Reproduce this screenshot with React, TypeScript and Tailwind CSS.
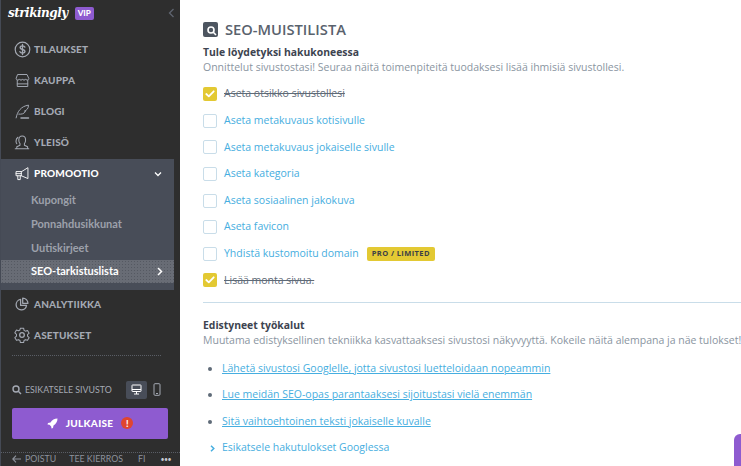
import React from "react";

const Stroke = ({ children, size = 20 }: { children: React.ReactNode; size?: number }) => (
  <svg width={size} height={size} viewBox="0 0 20 20" fill="none" stroke="currentColor" strokeWidth="1.300" strokeLinecap="round" strokeLinejoin="round" className="shrink-0">
    {children}
  </svg>
);

const icons: Record<string, React.ReactNode> = {
  dollar: (
    <Stroke size={17}>
      <circle cx="10" cy="10" r="8.6" strokeWidth="1.4" />
      <path d="M12.800 7.200c-.5-1-1.500-1.400-2.800-1.400-1.600 0-2.800.8-2.800 2.100 0 2.900 5.700 1.300 5.700 4.200 0 1.300-1.200 2.100-2.900 2.100-1.400 0-2.500-.5-3-1.600M10 4v12" strokeWidth="1.600" />
    </Stroke>
  ),
  store: (
    <Stroke size={15}>
      <path d="M4 2h12l2.500 5.500c0 1.500-1.300 2-2.200 2-1.100 0-2-.7-2.200-1.600-.2 1-1.100 1.600-2.100 1.600s-1.800-.6-2-1.600c-.2 1-1 1.600-2 1.600S6.100 8.900 5.900 7.900C5.700 8.800 4.800 9.500 3.700 9.500c-.9 0-2.200-.5-2.200-2zM3 9.500V18h14V9.500M3 14.500h14" />
    </Stroke>
  ),
  quill: (
    <Stroke size={15}>
      <path d="M1.500 18.500 C3 10 8 3 18 1.500 C18 6 15.500 8.500 12.500 9.500 L14 10 C12 13 9 14 5 13.500" />
      <path d="M8 18.500h10" strokeWidth="2" />
    </Stroke>
  ),
  people: (
    <Stroke size={16}>
      <path d="M1.500 18.500h17M3.500 18.500v-2.500l4-2v-2c-1-1-1.500-2.500-1.500-4.500 0-3 1.500-5 4.200-5s4.300 2 4.300 5c0 2-.5 3.500-1.500 4.500v2l4 2v2.500" />
      <path d="M5 4C3.500 5 2.500 6.500 2.500 9c0 1.200.3 2.300 1 3" />
    </Stroke>
  ),
  megaphone: (
    <Stroke size={14}>
      <path d="M18.500 1.500v15L9 12.500H1.500v-6H9zM4 12.500v5.500h3.500v-5.500M1.500 9.500H9M9 6.500v6" />
    </Stroke>
  ),
  pie: (
    <Stroke size={14}>
      <path d="M8 3.500a7.500 7.500 0 1 0 8.500 8.500H8z" strokeWidth="1.800" />
      <path d="M11 1.500a7.500 7.500 0 0 1 7.500 7.500H11z" strokeWidth="1.800" />
    </Stroke>
  ),
  gear: (
    <Stroke size={16}>
      <path d="M8 1.500h4l.6 2.700 1.700 1 2.600-.9 2 3.400-2 1.900v1.800l2 1.900-2 3.400-2.600-.9-1.700 1-.6 2.700H8l-.6-2.700-1.700-1-2.600.9-2-3.400 2-1.900V9.100l-2-1.900 2-3.400 2.600.9 1.700-1z" />
      <circle cx="10" cy="10" r="2.900" strokeWidth="1.600" />
    </Stroke>
  ),
};

const NavItem = ({ icon, label, active }: { icon: string; label: string; active?: boolean }) => (
  <div className={`flex h-[30.75px] items-center gap-[3px] pl-[12px] text-[10px] font-black tracking-[0.15px] ${active ? "text-white" : "text-[#a4a9b3]"}`}>
    <span className="flex w-[18px] justify-center">{icons[icon]}</span>
    <span>{label}</span>
  </div>
);

const Check = ({ done, label, badge }: { done?: boolean; label: string; badge?: boolean }) => (
  <div className="flex h-[26.6px] items-center">
    {done ? (
      <span className="flex h-[14px] w-[14px] items-center justify-center rounded-[2px] bg-[#e3c933]">
        <svg width="10" height="8" viewBox="0 0 10 8" fill="none" stroke="white" strokeWidth="1.800" strokeLinecap="round" strokeLinejoin="round">
          <path d="M1.300 4 3.800 6.300 8.700 1.300" />
        </svg>
      </span>
    ) : (
      <span className="h-[14px] w-[14px] rounded-[2px] border border-[#c9dde9] bg-white" />
    )}
    <span className={`ml-[7px] text-[10.5px] ${done ? "text-[#5f6b78] line-through" : "text-[#46aee0]"}`}>{label}</span>
    {badge && (
      <span className="ml-[8px] flex h-[14px] items-center rounded-[2px] bg-[#e3c933] px-[5px] text-[7.5px] font-bold tracking-[0.4px] text-[#3b3f46]">PRO / LIMITED</span>
    )}
  </div>
);

const Bullet = ({ label }: { label: string }) => (
  <div className="flex h-[26.4px] items-center pl-[5px]">
    <span className="h-[4px] w-[4px] rounded-full bg-[#5f6b78]" />
    <span className="ml-[10px] text-[10.5px] text-[#46aee0] underline">{label}</span>
  </div>
);

export default function App() {
  return (
    <div className="relative flex h-[466px] w-[741px] overflow-hidden bg-white font-['Open_Sans',sans-serif]">
      <aside className="flex h-full w-[180px] shrink-0 flex-col border-l border-[#454a55] bg-[#2e2e2e] font-['Lato',sans-serif]">
        <div className="flex h-[26px] shrink-0 items-center pl-[7px]">
          <span className="font-['DejaVu_Serif',serif] text-[12px] font-bold italic tracking-[-0.5px] text-white">strikingly</span>
          <span className="ml-[7px] flex h-[13px] items-center rounded-[2px] bg-[#8e5bd0] px-[3px] text-[8px] font-black text-white">VIP</span>
          <svg width="7" height="10" viewBox="0 0 7 10" fill="none" stroke="#5f6570" strokeWidth="1.300" className="ml-auto mr-[5px]">
            <path d="M5.500 1 1.500 5l4 4" />
          </svg>
        </div>
        <div className="flex flex-col pt-[8.5px]">
          <NavItem icon="dollar" label="TILAUKSET" />
          <NavItem icon="store" label="KAUPPA" />
          <NavItem icon="quill" label="BLOGI" />
          <NavItem icon="people" label="YLEISÖ" />
        </div>
        <div className="mt-[1.5px] flex h-[131px] w-[173px] shrink-0 flex-col bg-[#484d58]">
          <div className="flex h-[29px] items-center pr-[12px]">
            <div className="flex-1"><NavItem icon="megaphone" label="PROMOOTIO" active /></div>
            <svg width="8" height="6" viewBox="0 0 8 6" fill="none" stroke="white" strokeWidth="1.300"><path d="M1 1.500 4 4.500l3-3" /></svg>
          </div>
          <div className="flex h-[24px] items-center pl-[30px] text-[11px] font-bold text-[#9da1ab]">Kupongit</div>
          <div className="flex h-[24px] items-center pl-[30px] text-[11px] font-bold text-[#9da1ab]">Ponnahdusikkunat</div>
          <div className="flex h-[24px] items-center pl-[30px] text-[11px] font-bold text-[#9da1ab]">Uutiskirjeet</div>
          <div className="flex h-[23px] items-center justify-between bg-[#686c75] bg-[radial-gradient(#555962_0.5px,transparent_0.6px)] bg-[length:3px_3px] pl-[30px] pr-[11px] text-[11px] font-bold text-white">
            <span>SEO-tarkistuslista</span>
            <svg width="6" height="9" viewBox="0 0 6 9" fill="none" stroke="white" strokeWidth="1.500"><path d="M1 1l3.500 3.500L1 8" /></svg>
          </div>
        </div>
        <div className="-mt-[1px] flex flex-col">
          <NavItem icon="pie" label="ANALYTIIKKA" />
          <NavItem icon="gear" label="ASETUKSET" />
        </div>
        <div className="ml-[11px] mt-[4px] w-[149px] border-t border-dotted border-[#5a5e66]" />
        <div className="mt-[25px] flex h-[18px] items-center pl-[11px]">
          <svg width="10" height="10" viewBox="0 0 10 10" fill="none" stroke="#a4a9b3" strokeWidth="1.400"><circle cx="4" cy="4" r="3" /><path d="M6.300 6.300 9 9" /></svg>
          <span className="ml-[3px] whitespace-nowrap text-[8.8px] text-[#a4a9b3]">ESIKATSELE SIVUSTO</span>
          <span className="ml-[14px] flex h-[18px] w-[21px] items-center justify-center rounded-[2px] bg-[#484d58]">
            <svg width="11" height="11" viewBox="0 0 11 11" fill="none" stroke="white" strokeWidth="1"><rect x="1" y="1" width="9" height="6.500" rx="0.500" /><path d="M1 5.500h9M3 10h5M5.500 7.500V10" /></svg>
          </span>
          <span className="ml-[6px] flex h-[18px] w-[8px] items-center justify-center">
            <svg width="8" height="13" viewBox="0 0 8 13" fill="none" stroke="#a4a9b3" strokeWidth="1"><rect x="1" y="0.700" width="6" height="11.600" rx="1" /><path d="M3 10.500h2" /></svg>
          </span>
        </div>
        <div className="ml-[11px] mt-[9px] flex h-[31px] w-[156px] shrink-0 items-center justify-center rounded-[2px] bg-[#8e5bd0] text-[10px] font-black text-white">
          <svg width="11" height="11" viewBox="0 0 11 11" fill="white"><path d="M10.500.5C7.500.5 5 2 3.500 4.500L1 5l-.5 1.500 2 .3L4.200 8.500l.3 2L6 10l.5-2.500C9 6 10.500 3.500 10.500.5z" /></svg>
          <span className="ml-[8px] tracking-[0.3px]">JULKAISE</span>
          <span className="ml-[8px] flex h-[12px] w-[12px] items-center justify-center rounded-full bg-[#e0452f] text-[9px] font-black leading-none text-white">!</span>
        </div>
        <div className="mt-[13px] border-t border-dotted border-[#5a5e66]" />
        <div className="flex h-[13px] items-center whitespace-nowrap pl-[11px] text-[8.8px] text-[#8d929c]">
          <svg width="9" height="8" viewBox="0 0 9 8" fill="none" stroke="#8d929c" strokeWidth="1.100" className="shrink-0"><path d="M4 .7.800 4 4 7.300M.8 4H9" /></svg>
          <span className="ml-[4px]">POISTU</span>
          <span className="ml-[13px]">TEE KIERROS</span>
          <span className="ml-[15px]">FI</span>
          <span className="ml-[15px] text-[7px] tracking-[-0.5px] text-[#c5c8ce]">•••</span>
        </div>
      </aside>

      <main className="min-w-0 flex-1 pl-[23px] pt-[18px] text-[#8a95a1]">
        <div className="flex h-[22px] items-center">
          <span className="flex h-[15px] w-[15px] items-end justify-end rounded-[2px] bg-[#4d5560] pb-[1px] pr-[1px]">
            <svg width="11" height="11" viewBox="0 0 11 11" fill="none" stroke="white" strokeWidth="1.600"><circle cx="5" cy="5" r="3" /><path d="M7.300 7.300 10 10" /></svg>
          </span>
          <h1 className="ml-[7px] whitespace-nowrap text-[14.7px] font-semibold text-[#59626d]">SEO-MUISTILISTA</h1>
        </div>
        <div className="mt-[5px] whitespace-nowrap text-[10.4px] font-bold leading-[15px] text-[#3d4450]">Tule löydetyksi hakukoneessa</div>
        <div className="whitespace-nowrap text-[10.5px] leading-[15px]">Onnittelut sivustostasi! Seuraa näitä toimenpiteitä tuodaksesi lisää ihmisiä sivustollesi.</div>
        <div className="mt-[6px] flex w-[600px] flex-col whitespace-nowrap">
          <Check done label="Aseta otsikko sivustollesi" />
          <Check label="Aseta metakuvaus kotisivulle" />
          <Check label="Aseta metakuvaus jokaiselle sivulle" />
          <Check label="Aseta kategoria" />
          <Check label="Aseta sosiaalinen jakokuva" />
          <Check label="Aseta favicon" />
          <Check label="Yhdistä kustomoitu domain" badge />
          <Check done label="Lisää monta sivua." />
        </div>
        <div className="mt-[8px] border-t border-[#c9dde9]" />
        <div className="mt-[15px] whitespace-nowrap text-[10.4px] font-bold leading-[15px] text-[#3d4450]">Edistyneet työkalut</div>
        <div className="whitespace-nowrap text-[10.5px] leading-[15px]">Muutama edistyksellinen tekniikka kasvattaaksesi sivustosi näkyvyyttä. Kokeile näitä alempana ja näe tulokset!</div>
        <div className="mt-[8px] flex flex-col whitespace-nowrap">
          <Bullet label="Lähetä sivustosi Googlelle, jotta sivustosi luetteloidaan nopeammin" />
          <Bullet label="Lue meidän SEO-opas parantaaksesi sijoitustasi vielä enemmän" />
          <Bullet label="Sitä vaihtoehtoinen teksti jokaiselle kuvalle" />
          <div className="flex h-[26.4px] items-center pl-[7px] text-[10.5px] text-[#46aee0]">
            <svg width="5" height="7" viewBox="0 0 5 7" fill="none" stroke="#46aee0" strokeWidth="1.500"><path d="M1 .8 3.800 3.500 1 6.200" /></svg>
            <span className="ml-[7px]">Esikatsele hakutulokset Googlessa</span>
          </div>
        </div>
      </main>
      <div className="absolute bottom-0 right-0 h-[32px] w-[7px] rounded-tl-[6px] bg-[#8e5bd0]" />
    </div>
  );
}
